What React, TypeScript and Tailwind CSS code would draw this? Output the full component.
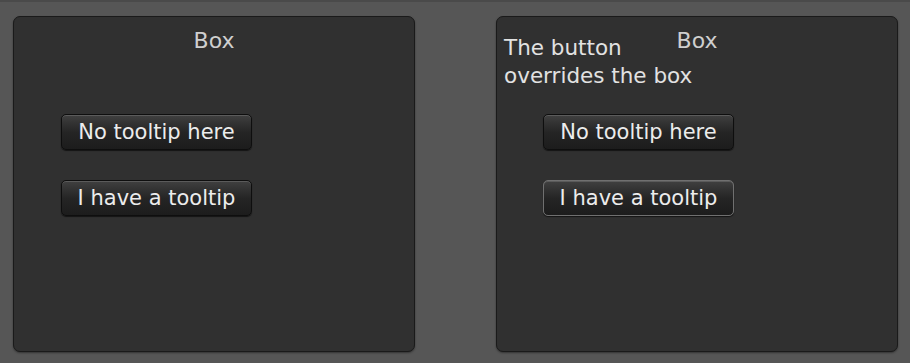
const font = "font-['DejaVu_Sans',sans-serif]";

function GuiButton({ label, hover = false }: { label: string; hover?: boolean }) {
  return (
    <button
      className={`flex h-[36px] w-[191px] items-center justify-center rounded-[5px] border bg-gradient-to-b from-[#404040] via-[#252525] to-[#1c1c1c] text-[21px] leading-none text-[#ececec] shadow-[inset_0_1px_0_rgba(255,255,255,0.15),0_1px_1px_rgba(0,0,0,0.6)] ${font} ${
        hover ? 'border-[#707070]' : 'border-[#0e0e0e]'
      }`}
    >
      {label}
    </button>
  );
}

function Panel({ overlay, btnLeft }: { overlay?: boolean; btnLeft: string }) {
  return (
    <div className="relative flex h-[336px] w-[402px] flex-col rounded-[7px] border border-[#1a1a1a] bg-[#303030] shadow-[0_1px_2px_rgba(0,0,0,0.4)]">
      <div className={`pt-[10px] text-center text-[22px] leading-[28px] text-[#cfcfcf] ${font}`}>Box</div>
      {overlay && (
        <div className={`absolute left-[7px] top-[17px] text-[21.5px] leading-[28px] text-[#e2e2e2] ${font}`}>
          The button
          <br />
          overrides the box
        </div>
      )}
      <div className={`mt-[59px] flex flex-col gap-[30px] ${btnLeft}`}>
        <GuiButton label="No tooltip here" />
        <GuiButton label="I have a tooltip" hover={!!overlay} />
      </div>
    </div>
  );
}

export default function App() {
  return (
    <div className="h-[363px] w-[910px] border-t-2 border-[#4a4a4a] bg-[#565656] pl-[13px] pt-[14px]">
      <div className="flex gap-[81px]">
        <Panel btnLeft="pl-[47px]" />
        <Panel overlay btnLeft="pl-[46px]" />
      </div>
    </div>
  );
}
